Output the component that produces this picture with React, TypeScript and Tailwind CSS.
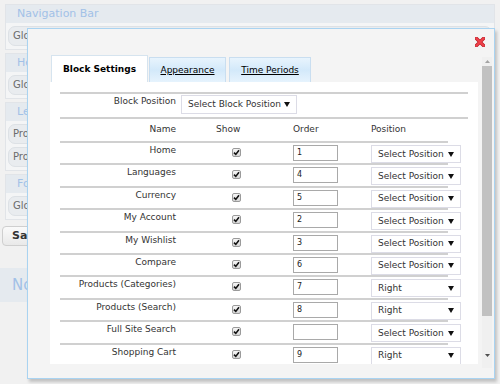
import React from 'react';

const rows = [
  { name: 'Home', order: '1', pos: 'Select Position' },
  { name: 'Languages', order: '4', pos: 'Select Position' },
  { name: 'Currency', order: '5', pos: 'Select Position' },
  { name: 'My Account', order: '2', pos: 'Select Position' },
  { name: 'My Wishlist', order: '3', pos: 'Select Position' },
  { name: 'Compare', order: '6', pos: 'Select Position' },
  { name: 'Products (Categories)', order: '7', pos: 'Right' },
  { name: 'Products (Search)', order: '8', pos: 'Right' },
  { name: 'Full Site Search', order: '', pos: 'Select Position' },
  { name: 'Shopping Cart', order: '9', pos: 'Right' },
];

function Caret() {
  return (
    <svg width="6" height="5" viewBox="0 0 6 5">
      <path d="M0 0h6L3 5z" fill="#111" />
    </svg>
  );
}

function CheckBox() {
  return (
    <div className="w-[9px] h-[9px] rounded-[2px] border border-[#9a9a9a] bg-gradient-to-b from-[#f7f7f7] to-[#d6d6d6] flex items-center justify-center">
      <svg width="7" height="7" viewBox="0 0 7 7">
        <path d="M1 3.6 2.8 5.4 6 1.3" fill="none" stroke="#111" strokeWidth="1.6" />
      </svg>
    </div>
  );
}

function BgPanel({ title, items }: { title: string; items: string[] }) {
  return (
    <div className="border border-[#e1e4e8] bg-[#f4f5f6] mb-[3px]">
      <div className="h-[18px] bg-[#e5eaef] pl-[11px] text-[11px] leading-[18px] text-[#a2c1e7]">{title}</div>
      <div className="flex flex-col gap-[3px] px-[2px] py-[3px]">
        {items.map((item, i) => (
          <div key={i} className="h-[20px] rounded-[7px] border border-[#dde1e5] bg-[#e9ecef] pl-[4px] text-[10px] leading-[18px] text-[#6b6b6b]">
            {item}
          </div>
        ))}
      </div>
    </div>
  );
}

function Tab({ label, active, w }: { label: string; active?: boolean; w: string }) {
  if (active) {
    return (
      <div className={`${w} h-[27px] bg-white border-l border-t border-r border-[#d6e4ef] flex items-center justify-center font-bold text-black`}>
        {label}
      </div>
    );
  }
  return (
    <div className={`${w} h-[25px] bg-gradient-to-b from-[#e8f4fd] via-[#d3e9fa] to-[#e6f3fd] border border-b-0 border-[#c9def0] flex items-center justify-center text-black underline`}>
      {label}
    </div>
  );
}

export default function App() {
  return (
    <div className="relative w-[500px] h-[384px] overflow-hidden bg-[#f1f1f1] font-['DejaVu_Sans',Verdana,sans-serif]">
      {/* page behind the dialog */}
      <div className="pt-[4px]">
        <div className="px-[5px]">
          <BgPanel title="Navigation Bar" items={['Global Navigation']} />
          <BgPanel title="Header" items={['Global Header']} />
          <BgPanel title="Left Column" items={['Products Navigation', 'Products Filter']} />
          <BgPanel title="Footer" items={['Global Footer']} />
        </div>
        <div className="pl-[2px] mt-[6px]">
          <div className="w-[70px] h-[20px] rounded-[4px] border border-[#cfcfcf] bg-gradient-to-b from-[#fafafa] to-[#e9e9e9] pl-[9px] text-[11px] leading-[18px] font-bold text-[#333]">
            Save
          </div>
        </div>
        <div className="mt-[22px] h-[34px] w-[300px] bg-[#e5eaef] pl-[12px] text-[15px] leading-[34px] text-[#a2c1e7]">
          Notes
        </div>
      </div>

      {/* dialog */}
      <div className="absolute left-[27px] top-[28px] w-[468px] h-[351px] border border-[#a9d3f1] bg-[#f4f4f4] shadow-[2px_3px_3px_rgba(0,0,0,0.2)] flex flex-col text-[9px] leading-[11px] text-[#333]">
        <div className="h-[26px] flex items-center justify-end pr-[9px]">
          <svg width="10" height="10" viewBox="0 0 10 10">
            <path d="M1.5 1.5 8.5 8.5M8.5 1.5 1.5 8.5" stroke="#b81d25" strokeWidth="3.4" strokeLinecap="square" />
            <path d="M1.5 1.5 8.5 8.5M8.5 1.5 1.5 8.5" stroke="#f0424b" strokeWidth="2" strokeLinecap="square" />
          </svg>
        </div>
        <div className="flex pl-[22px]">
          <div className="w-[428px] h-[309px] overflow-hidden flex flex-col shrink-0">
            <div className="h-[27px] flex items-end gap-[1px] pl-[1px]">
              <Tab label="Block Settings" active w="w-[97px]" />
              <Tab label="Appearance" w="w-[77px]" />
              <div className="w-[1px]" />
              <Tab label="Time Periods" w="w-[82px]" />
            </div>
            <div className="flex-1 bg-white px-[10px] pt-[10px]">
              <div className="w-[408px] border-t-2 border-b-2 border-[#d0d0d0]">
                <div className="h-[23px] flex items-start">
                  <div className="w-[116px] shrink-0 text-right mt-[2px]">Block Position</div>
                  <div className="ml-[5px] mt-[1px] w-[116px] shrink-0 h-[19px] border border-[#dcdce6] bg-white flex items-center justify-between pl-[6px] pr-[6px]">
                    <span>Select Block Position</span>
                    <Caret />
                  </div>
                </div>
              </div>
              <div className="w-[388px]">
                <div className="h-[24px] border-b-2 border-[#d0d0d0] flex items-start">
                  <div className="w-[116px] shrink-0 text-right mt-[5px]">Name</div>
                  <div className="w-[117px] shrink-0 pl-[40px] mt-[5px]">Show</div>
                  <div className="w-[78px] shrink-0 mt-[5px]">Order</div>
                  <div className="shrink-0 mt-[5px]">Position</div>
                </div>
                {rows.map((r, i) => (
                  <div key={i} className="h-[22.4px] border-b-2 border-[#d0d0d0] flex items-start">
                    <div className="w-[116px] shrink-0 text-right mt-[2px] whitespace-nowrap">{r.name}</div>
                    <div className="w-[117px] shrink-0 pl-[56px] mt-[5px]">
                      <CheckBox />
                    </div>
                    <div className="w-[78px] shrink-0 mt-[2px]">
                      <div className="w-[45px] h-[16px] border border-[#a9a9a9] bg-white pl-[3px] text-[8px] leading-[14px] text-[#222]">
                        {r.order}
                      </div>
                    </div>
                    <div className="mt-[2px] w-[90px] h-[18px] border border-[#dcdce6] bg-white flex items-center justify-between pl-[6px] pr-[6px] shrink-0">
                      <span>{r.pos}</span>
                      <Caret />
                    </div>
                  </div>
                ))}
              </div>
            </div>
          </div>
          {/* scrollbar */}
          <div className="ml-[4px] mt-[2px] w-[10px] h-[311px] bg-[#f0f0f0] flex flex-col items-center shrink-0">
            <div className="h-[9px] flex items-center justify-center">
              <svg width="5" height="3" viewBox="0 0 5 3">
                <path d="M0 3h5L2.5 0z" fill="#a3a3a3" />
              </svg>
            </div>
            <div className="w-[10px] h-[250px] bg-[#c1c1c1]" />
            <div className="flex-1" />
            <div className="h-[14px] flex items-start justify-center">
              <svg width="5" height="3" viewBox="0 0 5 3">
                <path d="M0 0h5L2.5 3z" fill="#505050" />
              </svg>
            </div>
          </div>
        </div>
      </div>
    </div>
  );
}
